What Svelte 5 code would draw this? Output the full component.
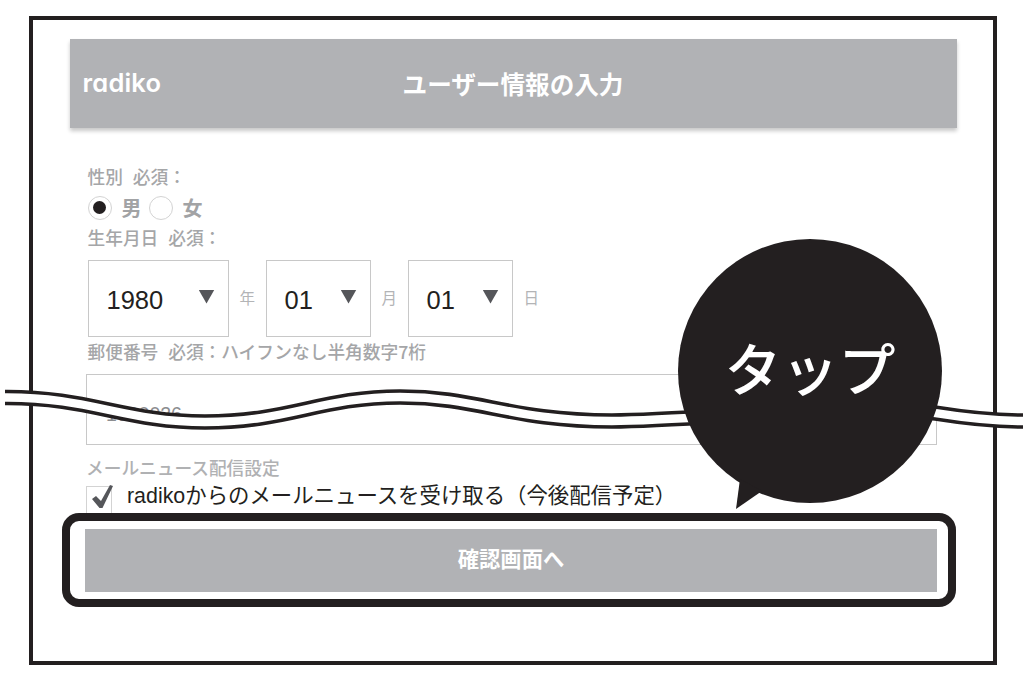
<script lang="ts">
  const dates = [
    { value: "1980", unit: "年", cls: "year" },
    { value: "01", unit: "月", cls: "" },
    { value: "01", unit: "日", cls: "" },
  ];
</script>

<div class="stage">
  <div class="frame">
    <header class="head">
      <span class="logo">radiko</span>
      <h1>ユーザー情報の入力</h1>
    </header>

    <form class="form">
      <div class="label first">性別&nbsp;&nbsp;必須：</div>
      <div class="gender">
        <span class="radio on"></span><span class="gname">男</span>
        <span class="radio"></span><span class="gname">女</span>
      </div>
      <div class="label birth">生年月日&nbsp;&nbsp;必須：</div>
      <div class="dates">
        {#each dates as d}
          <div class="select {d.cls}">
            <span class="val">{d.value}</span>
            <span class="arrow"></span>
          </div>
          <span class="unit">{d.unit}</span>
        {/each}
      </div>
      <div class="label zip">郵便番号&nbsp;&nbsp;必須：ハイフンなし半角数字7桁</div>
      <div class="input"><span>1000026</span></div>
      <div class="label news">メールニュース配信設定</div>
      <div class="check-row">
        <span class="checkbox">
          <svg viewBox="0 0 26 26" width="26" height="26" aria-hidden="true">
            <path d="M5 15 L9 12 L14 17 L23 1 L26 2 L15.5 24 L12.5 24 Z" fill="#55565a" />
          </svg>
        </span>
        <span class="check-text">radikoからのメールニュースを受け取る（今後配信予定）</span>
      </div>
    </form>

    <div class="highlight">
      <button type="button" class="submit">確認画面へ</button>
    </div>
  </div>

  <!-- torn-paper wave across the screen -->
  <svg class="wave" viewBox="0 0 1024 689" width="1024" height="689" aria-hidden="true">
    <path
      d="M5 391.5 C90 391 125 416 205 416 C290 416 320 391 400 391 C480 391 510 415 612 415 C700 415 850 395 935 407 C960 411 990 415 1023 415 L1023 427 C990 427 960 423 935 419 C850 407 700 427 612 427 C510 427 480 403 400 403 C320 403 290 428 205 428 C125 428 90 403 5 403.5 Z"
      fill="#fff"
    />
    <path d="M5 391.5 C90 391 125 416 205 416 C290 416 320 391 400 391 C480 391 510 415 612 415 C700 415 850 395 935 407 C960 411 990 415 1023 415" fill="none" stroke="#231f20" stroke-width="3.6" />
    <path d="M5 403.5 C90 403 125 428 205 428 C290 428 320 403 400 403 C480 403 510 427 612 427 C700 427 850 407 935 419 C960 423 990 427 1023 427" fill="none" stroke="#231f20" stroke-width="3.6" />
  </svg>

  <div class="bubble">
    <svg class="tail" viewBox="0 0 30 34" width="30" height="34" aria-hidden="true">
      <path d="M6 0 L2 30 L28 12 Z" fill="#231f20" />
    </svg>
    <span>タップ</span>
  </div>
</div>

<style>
  :global(body) {
    margin: 0;
    background: #fff;
  }

  .stage {
    position: relative;
    width: 1024px;
    height: 689px;
    overflow: hidden;
    padding: 16px 0 0 29px;
    box-sizing: border-box;
    font-family: "Noto Sans CJK JP", "Liberation Sans", sans-serif;
  }

  .frame {
    box-sizing: border-box;
    width: 968px;
    height: 649px;
    border: 4.5px solid #231f20;
    padding: 18.5px 36.5px 0 36.5px;
  }

  .head {
    display: grid;
    grid-template-columns: 1fr auto 1fr;
    align-items: center;
    height: 89px;
    padding: 0 13px;
    background: #b1b2b5;
    box-shadow: 0 3px 4px rgba(0, 0, 0, 0.22);
    color: #fff;
  }

  .logo {
    font-family: Inter, sans-serif;
    font-feature-settings: "cv11";
    font-size: 25.5px;
    font-weight: 600;
    letter-spacing: 0.2px;
    margin-top: -2px;
  }

  h1 {
    margin: 0;
    grid-column: 2;
    font-size: 24.6px;
    font-weight: 700;
    letter-spacing: 0;
    line-height: 1;
  }

  .form {
    display: flex;
    flex-direction: column;
    padding: 0 0 0 18px;
    color: #a2a3a5;
  }

  .label {
    font-size: 17.7px;
    line-height: 20px;
    font-weight: 500;
    word-spacing: 1px;
    color: #a5a6a8;
    white-space: nowrap;
  }

  .first {
    margin-top: 38px;
  }

  .gender {
    display: flex;
    align-items: center;
    height: 32px;
    margin-top: 6px;
  }

  .radio {
    box-sizing: border-box;
    width: 24px;
    height: 24px;
    border-radius: 50%;
    border: 1.5px solid #d3d3d3;
    background: #fff;
    display: flex;
    align-items: center;
    justify-content: center;
  }

  .radio.on::after {
    content: "";
    width: 13px;
    height: 13px;
    border-radius: 50%;
    background: #231f20;
  }

  .gname {
    font-size: 20px;
    font-weight: 700;
    line-height: 1;
    color: #a2a3a5;
    margin: 0 7px 0 10px;
  }

  .birth {
    margin-top: 3px;
  }

  .dates {
    display: flex;
    align-items: flex-start;
    margin-top: 13px;
  }

  .select {
    position: relative;
    box-sizing: border-box;
    width: 105px;
    height: 77px;
    border: 1.5px solid #c8c8c8;
    display: flex;
    align-items: center;
    padding: 5px 0 0 18px;
  }

  .select.year {
    width: 141px;
  }

  .val {
    font-family: "Liberation Sans", sans-serif;
    font-size: 25.5px;
    color: #231f20;
  }

  .arrow {
    position: absolute;
    right: 13px;
    top: 29px;
    width: 16px;
    height: 14px;
    background: #55565a;
    clip-path: polygon(0 0, 100% 0, 50% 100%);
  }

  .unit {
    width: 37px;
    box-sizing: border-box;
    padding: 27px 0 0 11px;
    font-size: 15.5px;
    line-height: 20px;
    color: #b3b4b6;
  }

  .zip {
    margin-top: 4px;
  }

  .input {
    box-sizing: border-box;
    height: 71px;
    margin: 13px 20px 0 -1.5px;
    border: 1.5px solid #c8c8c8;
    padding: 27px 0 0 19px;
    font-family: "Liberation Sans", sans-serif;
    font-size: 19.5px;
    line-height: 24px;
    color: #8c8d90;
  }

  .news {
    margin-top: 12px;
    margin-left: -1.5px;
    color: #b0b1b3;
  }

  .check-row {
    display: flex;
    height: 27px;
    margin-top: 9px;
    margin-left: -1.5px;
  }

  .checkbox {
    box-sizing: border-box;
    flex: none;
    width: 26px;
    height: 27px;
    border: 1.5px solid #d3d3d3;
    border-bottom: 0;
    position: relative;
  }

  .checkbox svg {
    position: absolute;
    left: 0;
    top: -3px;
  }

  .check-text {
    margin-left: 15px;
    margin-top: -3px;
    font-family: "Liberation Sans", "Noto Sans CJK JP", sans-serif;
    font-size: 21.4px;
    line-height: 26px;
    color: #231f20;
    white-space: nowrap;
  }

  .highlight {
    box-sizing: border-box;
    width: 894px;
    height: 94px;
    margin-left: -8px;
    border: 8.5px solid #231f20;
    border-radius: 17px;
    background: #fff;
    padding: 8px 10.5px 5px 15.5px;
  }

  .submit {
    display: block;
    width: 100%;
    height: 63px;
    border: 0;
    padding: 0 0 5px;
    background: #b1b2b5;
    color: #fff;
    font-family: inherit;
    font-size: 21.3px;
    font-weight: 700;
  }

  .wave {
    position: absolute;
    left: 0;
    top: 0;
    pointer-events: none;
  }

  .bubble {
    position: absolute;
    left: 678px;
    top: 239px;
    width: 264px;
    height: 264px;
    border-radius: 50%;
    background: #231f20;
    color: #fff;
    font-size: 57px;
    font-weight: 500;
    text-align: center;
  }

  .bubble span {
    display: block;
    margin-top: -5px;
    height: 240px;
    line-height: 264px;
    position: relative;
  }

  .tail {
    position: absolute;
    left: 56px;
    top: 240px;
  }
</style>
